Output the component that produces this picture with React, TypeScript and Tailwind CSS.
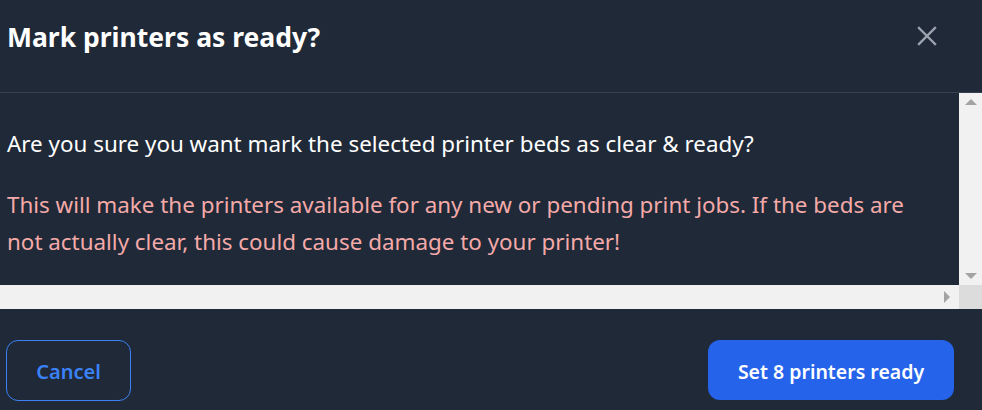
import React from "react";

export default function App() {
  return (
    <div className="w-[982px] h-[410px] bg-[#1f2937] flex flex-col overflow-hidden font-['Noto_Sans',sans-serif]">
      <div className="h-[93px] shrink-0 border-b border-[#374151] flex items-start justify-between pt-[19px] pl-[7px] pr-[45px]">
        <h2 className="text-[26.5px] leading-[36px] font-bold text-white">Mark printers as ready?</h2>
        <button className="mt-[7px] w-[20px] h-[20px] flex items-center justify-center text-[#9ca3af]">
          <svg width="20" height="20" viewBox="0 0 20 20" fill="none" stroke="currentColor" strokeWidth="2.4" strokeLinecap="square">
            <path d="M2 2 L18 18 M18 2 L2 18" />
          </svg>
        </button>
      </div>
      <div className="h-[216px] shrink-0 flex flex-col">
        <div className="flex h-[192px]">
          <div className="flex-1 pt-[32px] pl-[7px] pr-[10px]">
            <p className="text-[22.4px] leading-[37px] text-white">
              Are you sure you want mark the selected printer beds as clear &amp; ready?
            </p>
            <p className="mt-[24px] text-[22.4px] leading-[37px] text-[#f5a9a9]">
              This will make the printers available for any new or pending print jobs. If the beds are
              <br />
              not actually clear, this could cause damage to your printer!
            </p>
          </div>
          <div className="w-[23px] bg-[#f1f1f1] flex flex-col items-center justify-between py-[6px]">
            <div className="w-0 h-0 border-l-[6px] border-r-[6px] border-b-[6px] border-l-transparent border-r-transparent border-b-[#a3a3a3]" />
            <div className="w-0 h-0 border-l-[6px] border-r-[6px] border-t-[6px] border-l-transparent border-r-transparent border-t-[#a3a3a3]" />
          </div>
        </div>
        <div className="flex h-[24px]">
          <div className="flex-1 bg-[#f1f1f1] flex items-center justify-end pr-[9px]">
            <div className="w-0 h-0 border-t-[6px] border-b-[6px] border-l-[6px] border-t-transparent border-b-transparent border-l-[#a3a3a3]" />
          </div>
          <div className="w-[23px] bg-[#dcdcdc]" />
        </div>
      </div>
      <div className="flex-1 flex items-start justify-between pt-[31px] pl-[6px] pr-[28px]">
        <button className="w-[125px] h-[61px] pt-[3px] rounded-[12px] border border-[#3b82f6] text-[#3b82f6] text-[20px] font-semibold">
          Cancel
        </button>
        <button className="w-[246px] h-[60px] pt-[3px] rounded-[12px] bg-[#2563eb] text-white text-[19.5px] font-semibold">
          Set 8 printers ready
        </button>
      </div>
    </div>
  );
}
